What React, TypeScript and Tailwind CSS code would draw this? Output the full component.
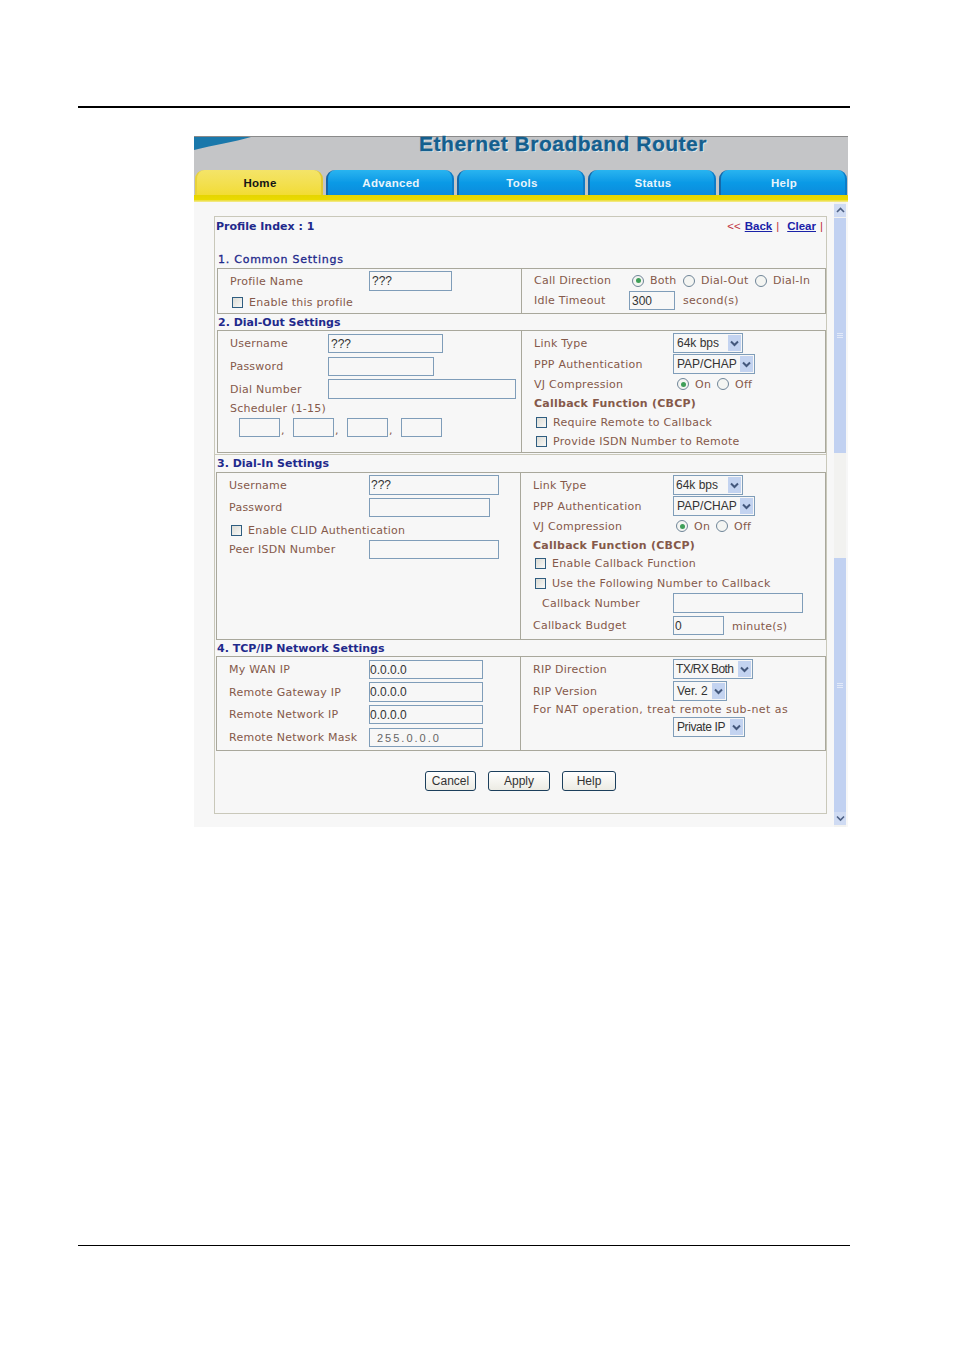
import type { ReactNode } from 'react'

const labelFont = "[font-family:'DejaVu_Sans',sans-serif] text-[11px] tracking-[0.25px] text-[#85594a]"
const fieldFont = "[font-family:'Liberation_Sans',sans-serif] text-[12px] text-[#333]"

function Label({ children, className = '' }: { children: ReactNode; className?: string }) {
  return <span className={`${labelFont} mt-[2px] whitespace-nowrap ${className}`}>{children}</span>
}

function SectionTitle({ children, className = '' }: { children: ReactNode; className?: string }) {
  return (
    <div className={`flex items-center whitespace-nowrap pt-[2px] [font-family:'DejaVu_Sans',sans-serif] text-[11px] font-bold text-[#1f2a8c] ${className}`}>
      {children}
    </div>
  )
}

function TextBox({ value = '', className = '' }: { value?: string; className?: string }) {
  return (
    <input
      readOnly
      value={value}
      className={`${fieldFont} box-border h-full border border-[#7f9db9] bg-[#f7f7f7] px-[2px] outline-none ${className}`}
    />
  )
}

function Select({ value, className = '', textClass = '' }: { value: string; className?: string; textClass?: string }) {
  return (
    <div className={`box-border flex h-full items-center justify-between border border-[#7f9db9] bg-[#f7f7f7] pl-[3px] pr-[1px] ${className}`}>
      <span className={`${fieldFont} whitespace-nowrap ${textClass}`}>{value}</span>
      <span className="flex h-[16px] w-[13px] items-center justify-center bg-[#c3d3f0]">
        <svg width="9" height="7" viewBox="0 0 9 7" fill="none" stroke="#44587c" strokeWidth="2">
          <path d="M1 1.5 L4.5 5 L8 1.5" />
        </svg>
      </span>
    </div>
  )
}

function Radio({ checked = false }: { checked?: boolean }) {
  return (
    <span className="box-border flex h-[12px] w-[12px] shrink-0 items-center justify-center rounded-full border border-[#6f8598] bg-[#f4f5f2]">
      {checked && <span className="h-[5px] w-[5px] rounded-full bg-[#3f9f58]" />}
    </span>
  )
}

function Checkbox() {
  return <span className="box-border block h-[11px] w-[11px] shrink-0 border border-[#2f5d80] bg-gradient-to-br from-[#dcdcd6] to-[#f8f8f6]" />
}

function Box({ left, right, className = '', leftClass = '' }: { left: ReactNode; right: ReactNode; className?: string; leftClass?: string }) {
  return (
    <div className={`box-border flex border border-[#a9a89c] ${className}`}>
      <div className={`flex flex-col border-r border-[#a9a89c] pl-[12px] ${leftClass}`}>{left}</div>
      <div className="flex min-w-0 flex-1 flex-col pl-[12px]">{right}</div>
    </div>
  )
}

function Tab({ label, active = false }: { label: string; active?: boolean }) {
  return (
    <div
      className={`flex h-[25px] w-[128px] items-center justify-center rounded-t-[9px] border-l-2 border-r-2 pl-[2px] pt-[2px] [font-family:'Liberation_Sans',sans-serif] text-[11.5px] font-bold tracking-[0.3px] ${
        active
          ? 'border-l-[#e8d23a] border-r-[#e0c830] bg-gradient-to-b from-[#f4e468] to-[#f2dc32] text-[#151515]'
          : 'border-l-[#1667a8] border-r-[#0c7cc8] bg-gradient-to-b from-[#28b4f0] via-[#0a9ae6] to-[#0b8bdc] text-[#e8f4fb]'
      }`}
    >
      {label}
    </div>
  )
}

function ScrollGrip() {
  return (
    <span className="flex flex-col gap-[1px]">
      <span className="block h-[1px] w-[6px] bg-[#e2e9f8]" />
      <span className="block h-[1px] w-[6px] bg-[#e2e9f8]" />
      <span className="block h-[1px] w-[6px] bg-[#e2e9f8]" />
    </span>
  )
}

function ScrollButton({ down = false }: { down?: boolean }) {
  return (
    <div className="flex h-[13px] w-[12px] items-center justify-center bg-[#cfdbf3]">
      <svg width="9" height="7" viewBox="0 0 9 7" fill="none" stroke="#4d6185" strokeWidth="1.6">
        <path d={down ? 'M1 1.5 L4.5 5 L8 1.5' : 'M1 5 L4.5 1.5 L8 5'} />
      </svg>
    </div>
  )
}

export default function App() {
  return (
    <div className="h-[1348px] w-[954px] overflow-hidden bg-white pl-[78px] pt-[106px]">
      <div className="h-[2px] w-[772px] bg-black" />

      <div className="ml-[116px] mt-[28px] h-[691px] w-[654px] bg-[#f7f7f7]">
        {/* banner */}
        <div className="relative flex h-[34px] justify-center border-t border-[#8a8a8a] bg-[#c4c5c7]">
          <svg className="absolute left-0 top-0" width="60" height="14" viewBox="0 0 60 14">
            <path d="M0 0 H57 C40 5 20 8 0 13 Z" fill="#1a78ab" />
          </svg>
          <span className="ml-[84px] h-[17px] [font-family:'Liberation_Sans',sans-serif] text-[21px] font-bold leading-[13px] tracking-[0.5px] text-[#145f8e] [text-shadow:1px_1px_0_#e8eef2] [-webkit-text-stroke:0.3px_#145f8e]">
            Ethernet Broadband Router
          </span>
        </div>

        {/* tabs */}
        <div className="flex h-[25px] gap-[3px] bg-[#c4c5c7] pl-[1px]">
          <Tab label="Home" active />
          <Tab label="Advanced" />
          <Tab label="Tools" />
          <Tab label="Status" />
          <Tab label="Help" />
        </div>
        <div className="h-[7px] bg-gradient-to-b from-[#e6d400] via-[#eadb00] via-70% to-[#f4ec90]" />

        <div className="flex h-[625px]">
          <div className="w-[640px] pl-[20px] pt-[14px]">
            <div className="w-[613px]">
              {/* upper part of the frame */}
              <div className="box-border h-[238px] border-x border-t border-[#c9c8ba]">
                <div className="flex h-[18px] items-center justify-between pl-[1px] pr-[3px]">
                  <SectionTitle>Profile Index : 1</SectionTitle>
                  <div className="mt-[2px] flex items-center gap-[4px] whitespace-nowrap [font-family:'Liberation_Sans',sans-serif] text-[11.5px]">
                    <span className="text-[#c03040]">&lt;&lt;</span>
                    <a className="font-bold text-[#1a22a8] underline">Back</a>
                    <span className="text-[#c03040]">|</span>
                    <a className="ml-[4px] font-bold text-[#1a22a8] underline">Clear</a>
                    <span className="text-[#c03040]">|</span>
                  </div>
                </div>
                <SectionTitle className="mt-[16px] h-[17px] pl-[3px] !font-normal tracking-[0.75px] [-webkit-text-stroke:0.3px_#1f2a8c]">1. Common Settings</SectionTitle>
                <Box
                  className="ml-[2px] h-[46px] w-[609px]"
                  leftClass="w-[304px]"
                  left={
                    <>
                      <div className="mt-[2px] flex h-[20px] items-center">
                        <Label className="w-[139px]">Profile Name</Label>
                        <TextBox value="???" className="w-[83px]" />
                      </div>
                      <div className="flex h-[22px] items-center gap-[6px] pl-[2px]">
                        <Checkbox />
                        <Label>Enable this profile</Label>
                      </div>
                    </>
                  }
                  right={
                    <>
                      <div className="mt-[2px] flex h-[19px] items-center">
                        <Label className="w-[98px]">Call Direction</Label>
                        <Radio checked />
                        <Label className="ml-[6px] w-[33px]">Both</Label>
                        <Radio />
                        <Label className="ml-[6px] w-[54px]">Dial-Out</Label>
                        <Radio />
                        <Label className="ml-[6px]">Dial-In</Label>
                      </div>
                      <div className="mt-[1px] flex h-[19px] items-center">
                        <Label className="w-[95px]">Idle Timeout</Label>
                        <TextBox value="300" className="w-[46px]" />
                        <Label className="ml-[8px]">second(s)</Label>
                      </div>
                    </>
                  }
                />
                <SectionTitle className="h-[16px] pl-[3px]">2. Dial-Out Settings</SectionTitle>
                <Box
                  className="ml-[2px] h-[123px] w-[609px]"
                  leftClass="w-[304px]"
                  left={
                    <>
                      <div className="mt-[3px] flex h-[19px] items-center">
                        <Label className="w-[98px]">Username</Label>
                        <TextBox value="???" className="w-[115px]" />
                      </div>
                      <div className="mt-[4px] flex h-[19px] items-center">
                        <Label className="w-[98px]">Password</Label>
                        <TextBox className="w-[106px]" />
                      </div>
                      <div className="mt-[3px] flex h-[20px] items-center">
                        <Label className="w-[98px]">Dial Number</Label>
                        <TextBox className="w-[188px]" />
                      </div>
                      <div className="flex h-[18px] items-center">
                        <Label>Scheduler (1-15)</Label>
                      </div>
                      <div className="mt-[1px] flex h-[19px] items-end pl-[9px]">
                        <TextBox className="w-[41px]" />
                        <Label className="w-[13px] pl-[1px] leading-[12px]">,</Label>
                        <TextBox className="w-[41px]" />
                        <Label className="w-[13px] pl-[1px] leading-[12px]">,</Label>
                        <TextBox className="w-[41px]" />
                        <Label className="w-[13px] pl-[1px] leading-[12px]">,</Label>
                        <TextBox className="w-[41px]" />
                      </div>
                    </>
                  }
                  right={
                    <>
                      <div className="mt-[2px] flex h-[20px] items-center">
                        <Label className="w-[139px]">Link Type</Label>
                        <Select value="64k bps" className="w-[70px]" />
                      </div>
                      <div className="mt-[1px] flex h-[20px] items-center">
                        <Label className="w-[139px]">PPP Authentication</Label>
                        <Select value="PAP/CHAP" className="w-[82px]" />
                      </div>
                      <div className="flex h-[20px] items-center">
                        <Label className="w-[143px]">VJ Compression</Label>
                        <Radio checked />
                        <Label className="ml-[6px] w-[22px]">On</Label>
                        <Radio />
                        <Label className="ml-[6px]">Off</Label>
                      </div>
                      <div className="flex h-[18px] items-center">
                        <Label className="font-bold">Callback Function (CBCP)</Label>
                      </div>
                      <div className="flex h-[20px] items-center gap-[6px] pl-[2px]">
                        <Checkbox />
                        <Label>Require Remote to Callback</Label>
                      </div>
                      <div className="flex h-[19px] items-center gap-[6px] pl-[2px]">
                        <Checkbox />
                        <Label>Provide ISDN Number to Remote</Label>
                      </div>
                    </>
                  }
                />
              </div>

              {/* lower part of the frame, captured separately */}
              <div className="box-border h-[360px] border border-[#c9c8ba]">
                <SectionTitle className="h-[17px] pl-[2px]">3. Dial-In Settings</SectionTitle>
                <Box
                  className="ml-[1px] h-[168px] w-[610px]"
                  leftClass="w-[304px]"
                  left={
                    <>
                      <div className="mt-[2px] flex h-[20px] items-center">
                        <Label className="w-[140px]">Username</Label>
                        <TextBox value="???" className="w-[130px] !pl-[1px]" />
                      </div>
                      <div className="mt-[3px] flex h-[19px] items-center">
                        <Label className="w-[140px]">Password</Label>
                        <TextBox className="w-[121px]" />
                      </div>
                      <div className="mt-[3px] flex h-[20px] items-center gap-[6px] pl-[2px]">
                        <Checkbox />
                        <Label>Enable CLID Authentication</Label>
                      </div>
                      <div className="flex h-[19px] items-center">
                        <Label className="w-[140px]">Peer ISDN Number</Label>
                        <TextBox className="w-[130px]" />
                      </div>
                    </>
                  }
                  right={
                    <>
                      <div className="mt-[2px] flex h-[20px] items-center">
                        <Label className="w-[140px]">Link Type</Label>
                        <Select value="64k bps" className="w-[70px] !pl-[2px]" />
                      </div>
                      <div className="mt-[1px] flex h-[20px] items-center">
                        <Label className="w-[140px]">PPP Authentication</Label>
                        <Select value="PAP/CHAP" className="w-[82px]" />
                      </div>
                      <div className="flex h-[20px] items-center">
                        <Label className="w-[143px]">VJ Compression</Label>
                        <Radio checked />
                        <Label className="ml-[6px] w-[22px]">On</Label>
                        <Radio />
                        <Label className="ml-[6px]">Off</Label>
                      </div>
                      <div className="flex h-[18px] items-center">
                        <Label className="font-bold">Callback Function (CBCP)</Label>
                      </div>
                      <div className="flex h-[18px] items-center gap-[6px] pl-[2px]">
                        <Checkbox />
                        <Label>Enable Callback Function</Label>
                      </div>
                      <div className="mt-[1px] flex h-[20px] items-center gap-[6px] pl-[2px]">
                        <Checkbox />
                        <Label>Use the Following Number to Callback</Label>
                      </div>
                      <div className="flex h-[20px] items-center pl-[9px]">
                        <Label className="w-[131px]">Callback Number</Label>
                        <TextBox className="w-[130px]" />
                      </div>
                      <div className="mt-[3px] flex h-[19px] items-center">
                        <Label className="w-[140px]">Callback Budget</Label>
                        <TextBox value="0" className="w-[51px] !pl-[1px]" />
                        <Label className="ml-[8px] !mt-[4px]">minute(s)</Label>
                      </div>
                    </>
                  }
                />
                <SectionTitle className="h-[16px] pl-[2px]">4. TCP/IP Network Settings</SectionTitle>
                <Box
                  className="ml-[1px] h-[95px] w-[610px]"
                  leftClass="w-[304px]"
                  left={
                    <>
                      <div className="mt-[3px] flex h-[19px] items-center">
                        <Label className="w-[140px]">My WAN IP</Label>
                        <TextBox value="0.0.0.0" className="w-[114px] !pl-0" />
                      </div>
                      <div className="mt-[3px] flex h-[20px] items-center">
                        <Label className="w-[140px]">Remote Gateway IP</Label>
                        <TextBox value="0.0.0.0" className="w-[114px] !pl-0" />
                      </div>
                      <div className="mt-[3px] flex h-[19px] items-center">
                        <Label className="w-[140px]">Remote Network IP</Label>
                        <TextBox value="0.0.0.0" className="w-[114px] !pl-0" />
                      </div>
                      <div className="mt-[4px] flex h-[19px] items-center">
                        <Label className="w-[140px]">Remote Network Mask</Label>
                        <TextBox value="255.0.0.0" className="w-[114px] !pl-[7px] !text-[11px] tracking-[2px] !text-[#666]" />
                      </div>
                    </>
                  }
                  right={
                    <>
                      <div className="mt-[2px] flex h-[20px] items-center">
                        <Label className="w-[140px]">RIP Direction</Label>
                        <Select value="TX/RX Both" className="w-[80px] !pl-[2px]" textClass="tracking-[-0.6px]" />
                      </div>
                      <div className="mt-[2px] flex h-[20px] items-center">
                        <Label className="w-[140px]">RIP Version</Label>
                        <Select value="Ver. 2" className="w-[54px]" />
                      </div>
                      <div className="flex h-[16px] items-center">
                        <Label className="!tracking-[0.45px]">For NAT operation, treat remote sub-net as</Label>
                      </div>
                      <div className="flex h-[20px] items-center pl-[140px]">
                        <Select value="Private IP" className="w-[72px]" textClass="tracking-[-0.4px]" />
                      </div>
                    </>
                  }
                />
                <div className="ml-[210px] mt-[20px] flex h-[20px] gap-[12px]">
                  <button className={`${fieldFont} h-full w-[51px] rounded-[3px] border border-[#1c3f5c] bg-gradient-to-b from-white to-[#ecebe3]`}>Cancel</button>
                  <button className={`${fieldFont} h-full w-[62px] rounded-[3px] border border-[#1c3f5c] bg-gradient-to-b from-white to-[#ecebe3]`}>Apply</button>
                  <button className={`${fieldFont} h-full w-[54px] rounded-[3px] border border-[#1c3f5c] bg-gradient-to-b from-white to-[#ecebe3]`}>Help</button>
                </div>
              </div>
            </div>
          </div>

          {/* scrollbar, also two captures stitched */}
          <div className="flex w-[12px] flex-col bg-[#f2f2f0] pt-[2px]">
            <ScrollButton />
            <div className="mt-[1px] flex h-[235px] items-center justify-center bg-[#c1d1f1]">
              <ScrollGrip />
            </div>
            <div className="h-[105px]" />
            <div className="flex h-[254px] items-center justify-center bg-[#c1d1f1]">
              <ScrollGrip />
            </div>
            <ScrollButton down />
          </div>
        </div>
      </div>

      <div className="mt-[418px] h-[1px] w-[772px] bg-black" />
    </div>
  )
}
